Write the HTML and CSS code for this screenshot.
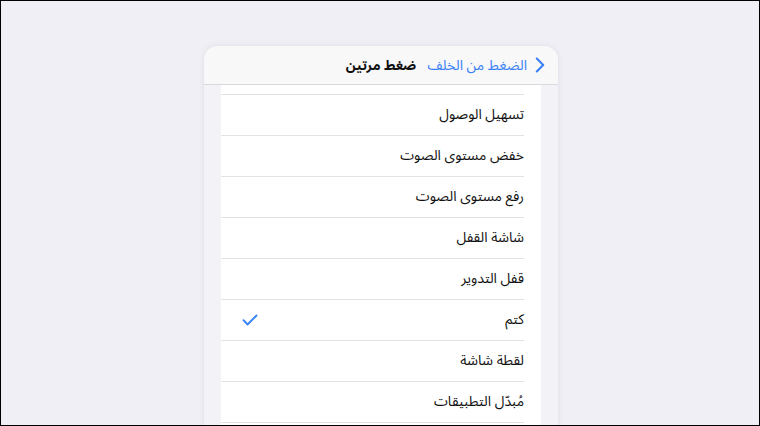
FILE: index.html
```html
<!DOCTYPE html>
<html lang="ar" dir="rtl">
<head>
<meta charset="utf-8">
<link rel="stylesheet" href="styles.css">
</head>
<body>
<div class="screen">
  <div class="card">
    <div class="header">
      <div class="back">
        <svg class="chev" width="10" height="16" viewBox="0 0 10 16"><path d="M1.8 1.5 L8.2 8 L1.8 14.5" fill="none" stroke="#3a80f6" stroke-width="2.1" stroke-linecap="round" stroke-linejoin="round"/></svg>
        <span>الضغط من الخلف</span>
      </div>
      <div class="title">ضغط مرتين</div>
      <div></div>
    </div>
    <div class="body">
      <div class="list">
        <div class="row top"><div class="inner"></div></div>
        <div class="row"><div class="inner"><span>تسهيل الوصول</span></div></div>
        <div class="row"><div class="inner"><span>خفض مستوى الصوت</span></div></div>
        <div class="row"><div class="inner"><span>رفع مستوى الصوت</span></div></div>
        <div class="row"><div class="inner"><span>شاشة القفل</span></div></div>
        <div class="row"><div class="inner"><span>قفل التدوير</span></div></div>
        <div class="row"><div class="inner"><span>كتم</span>
          <svg class="check" width="16" height="12" viewBox="0 0 16 12"><path d="M1.5 6.2 L5.6 10.5 L14.5 1.5" fill="none" stroke="#3a80f6" stroke-width="1.9" stroke-linecap="round" stroke-linejoin="round"/></svg>
        </div></div>
        <div class="row"><div class="inner"><span>لقطة شاشة</span></div></div>
        <div class="row"><div class="inner"><span>مُبدّل التطبيقات</span></div></div>
        <div class="row"><div class="inner"></div></div>
      </div>
    </div>
  </div>
</div>
</body>
</html>
```
FILE: styles.css
```css
* { box-sizing: border-box; }
html, body { margin: 0; padding: 0; }
body {
  width: 760px;
  height: 426px;
  overflow: hidden;
  font-family: "Noto Sans Arabic", "DejaVu Sans", sans-serif;
}
.screen {
  width: 760px;
  height: 426px;
  border: 1px solid #000;
  background: #f0eff5;
  display: flex;
  justify-content: center;
  padding-top: 45px;
  padding-left: 2px;
  overflow: hidden;
}
.card {
  width: 354px;
  height: 420px;
  border-radius: 14px 14px 0 0;
  overflow: hidden;
  background: #f2f2f7;
  box-shadow: 0 0 6px rgba(0, 0, 0, 0.08);
  display: flex;
  flex-direction: column;
}
.header {
  height: 39px;
  flex: none;
  background: #f8f8f9;
  border-bottom: 1px solid #d9d9dd;
  display: grid;
  grid-template-columns: 1fr auto 1fr;
  align-items: center;
}
.back {
  display: flex;
  align-items: center;
  gap: 8px;
  padding-right: 13px;
  color: #3a80f6;
  font-size: 14px;
}
.chev { flex: none; }
.title {
  font-weight: bold;
  font-size: 13.5px;
  color: #111;
}
.body {
  flex: 1;
  padding: 0 17px;
}
.list {
  background: #fff;
}
.row {
  padding-right: 17px;
}
.row .inner {
  height: 41px;
  border-bottom: 1px solid #e3e3e6;
  display: flex;
  align-items: center;
  justify-content: space-between;
  padding-left: 21px;
  padding-bottom: 2px;
  font-size: 14px;
  color: #111;
}
.row.top .inner { height: 10px; padding-bottom: 0; }
.check { flex: none; margin-top: 1px; }
```
